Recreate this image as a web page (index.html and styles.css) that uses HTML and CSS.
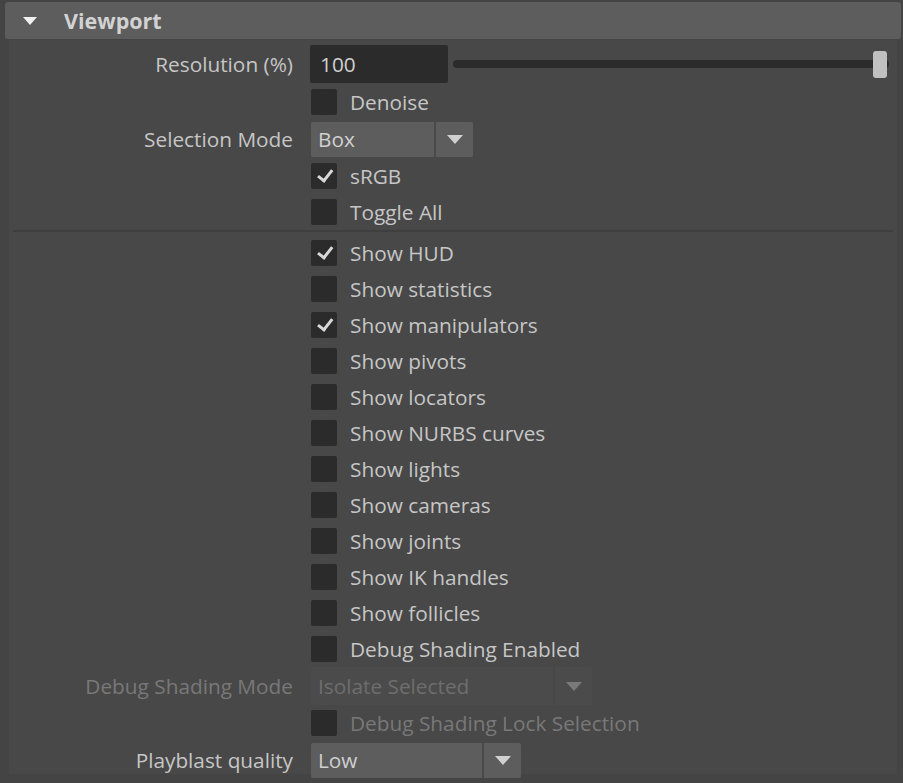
FILE: index.html
```html
<!DOCTYPE html>
<html lang="en">
<head>
    <meta charset="UTF-8">
    <title>Viewport Settings</title>
    <link rel="stylesheet" href="styles.css">
</head>
<body>
    <div class="section-header">
        <span class="caret"></span>
        <span class="section-title">Viewport</span>
    </div>

    <div class="panel">
        <div class="row row-tall">
            <label class="label">Resolution (%)</label>
            <div class="control">
                <div class="field">100</div>
                <div class="slider">
                    <div class="track"></div>
                    <div class="handle"></div>
                </div>
            </div>
        </div>
        <div class="row">
            <span class="label"></span>
            <div class="control"><span class="check"></span><span class="check-text">Denoise</span></div>
        </div>
        <div class="row row-combo">
            <label class="label">Selection Mode</label>
            <div class="control">
                <div class="combo combo-small"><span class="combo-text">Box</span><span class="combo-btn"><span class="arrow"></span></span></div>
            </div>
        </div>
        <div class="row">
            <span class="label"></span>
            <div class="control"><span class="check checked"></span><span class="check-text">sRGB</span></div>
        </div>
        <div class="row">
            <span class="label"></span>
            <div class="control"><span class="check"></span><span class="check-text">Toggle All</span></div>
        </div>

        <div class="separator"></div>

        <div class="row"><span class="label"></span><div class="control"><span class="check checked"></span><span class="check-text">Show HUD</span></div></div>
        <div class="row"><span class="label"></span><div class="control"><span class="check"></span><span class="check-text">Show statistics</span></div></div>
        <div class="row"><span class="label"></span><div class="control"><span class="check checked"></span><span class="check-text">Show manipulators</span></div></div>
        <div class="row"><span class="label"></span><div class="control"><span class="check"></span><span class="check-text">Show pivots</span></div></div>
        <div class="row"><span class="label"></span><div class="control"><span class="check"></span><span class="check-text">Show locators</span></div></div>
        <div class="row"><span class="label"></span><div class="control"><span class="check"></span><span class="check-text">Show NURBS curves</span></div></div>
        <div class="row"><span class="label"></span><div class="control"><span class="check"></span><span class="check-text">Show lights</span></div></div>
        <div class="row"><span class="label"></span><div class="control"><span class="check"></span><span class="check-text">Show cameras</span></div></div>
        <div class="row"><span class="label"></span><div class="control"><span class="check"></span><span class="check-text">Show joints</span></div></div>
        <div class="row"><span class="label"></span><div class="control"><span class="check"></span><span class="check-text">Show IK handles</span></div></div>
        <div class="row"><span class="label"></span><div class="control"><span class="check"></span><span class="check-text">Show follicles</span></div></div>
        <div class="row"><span class="label"></span><div class="control"><span class="check"></span><span class="check-text">Debug Shading Enabled</span></div></div>

        <div class="row row-combo disabled">
            <label class="label">Debug Shading Mode</label>
            <div class="control">
                <div class="combo combo-wide"><span class="combo-text">Isolate Selected</span><span class="combo-btn"><span class="arrow"></span></span></div>
            </div>
        </div>
        <div class="row disabled">
            <span class="label"></span>
            <div class="control"><span class="check"></span><span class="check-text">Debug Shading Lock Selection</span></div>
        </div>
        <div class="row row-combo">
            <label class="label">Playblast quality</label>
            <div class="control">
                <div class="combo combo-mid"><span class="combo-text">Low</span><span class="combo-btn"><span class="arrow"></span></span></div>
            </div>
        </div>
    </div>
</body>
</html>
```

FILE: styles.css
```css
html, body {
    margin: 0;
    padding: 0;
}
body {
    width: 903px;
    height: 783px;
    background: #444444;
    font-family: "Open Sans", "Noto Sans", sans-serif;
    font-size: 20.8px;
    color: #c6c6c6;
    overflow: hidden;
}
.section-header {
    display: flex;
    align-items: center;
    height: 37px;
    margin: 2px 2px 0 5px;
    background: #5d5d5d;
    border-radius: 3px;
}
.caret {
    width: 0;
    height: 0;
    margin-left: 18px;
    border-left: 7px solid transparent;
    border-right: 7px solid transparent;
    border-top: 8px solid #f0f0f0;
}
.section-title {
    margin-left: 27px;
    font-weight: bold;
    font-size: 21.5px;
    color: #d2d2d2;
}
.panel {
    margin: 1px 6px 0 9px;
    padding-top: 4px;
    height: 734px;
    background: #484848;
    box-sizing: border-box;
}
.row {
    display: flex;
    align-items: center;
    height: 36px;
}
.row-tall { height: 40px; }
.row-combo { height: 38px; }
.label {
    width: 284px;
    flex: none;
    text-align: right;
    white-space: nowrap;
}
.control {
    flex: 1;
    display: flex;
    align-items: center;
    margin-left: 17px;
    min-width: 0;
}
.field {
    width: 128px;
    height: 38px;
    line-height: 38px;
    padding-left: 10px;
    background: #2b2b2b;
    border-radius: 2px;
    color: #d0d0d0;
}
.slider {
    position: relative;
    flex: 1;
    height: 28px;
    margin-left: 5px;
    margin-right: 8px;
}
.track {
    position: absolute;
    left: 0;
    right: 0;
    top: 10px;
    height: 8px;
    background: #2b2b2b;
    border-radius: 4px;
}
.handle {
    position: absolute;
    right: 2px;
    top: 1px;
    width: 14px;
    height: 27px;
    background: #c0c0c0;
    border-radius: 3px;
}
.check {
    position: relative;
    width: 26px;
    height: 26px;
    flex: none;
    background: #2b2b2b;
    border-radius: 2px;
    margin-left: 1px;
}
.check.checked::after {
    content: "";
    position: absolute;
    left: 5px;
    top: 4px;
    width: 12px;
    height: 6px;
    border-left: 3px solid #d8d8d8;
    border-bottom: 3px solid #d8d8d8;
    transform: rotate(-52deg) translate(-1px, 3px);
}
.check-text {
    margin-left: 13px;
    white-space: nowrap;
}
.separator {
    height: 5px;
    margin: 0 4px;
    border-top: 2px solid #3f3f3f;
    box-sizing: border-box;
}
.combo {
    display: flex;
    align-items: stretch;
    height: 35px;
    background: #5d5d5d;
    border-radius: 2px;
    margin-left: 1px;
}
.combo-text {
    flex: 1;
    display: flex;
    align-items: center;
    padding-left: 7px;
    color: #d0d0d0;
}
.combo-btn {
    display: flex;
    align-items: center;
    justify-content: center;
    width: 37px;
    border-left: 2px solid #4a4a4a;
}
.arrow {
    width: 0;
    height: 0;
    border-left: 8px solid transparent;
    border-right: 8px solid transparent;
    border-top: 9px solid #d0d0d0;
}
.combo-small { width: 162px; }
.combo-mid { width: 210px; }
.combo-wide {
    width: 281px;
    height: 38px;
    background: #4b4b4b;
}
.combo-wide .combo-btn { border-left-color: #474747; }
.disabled { color: #787878; }
.disabled .combo-text { color: #6e6e6e; }
.disabled .arrow { border-top-color: #7a7a7a; }
.disabled .check-text { color: #787878; }
```
